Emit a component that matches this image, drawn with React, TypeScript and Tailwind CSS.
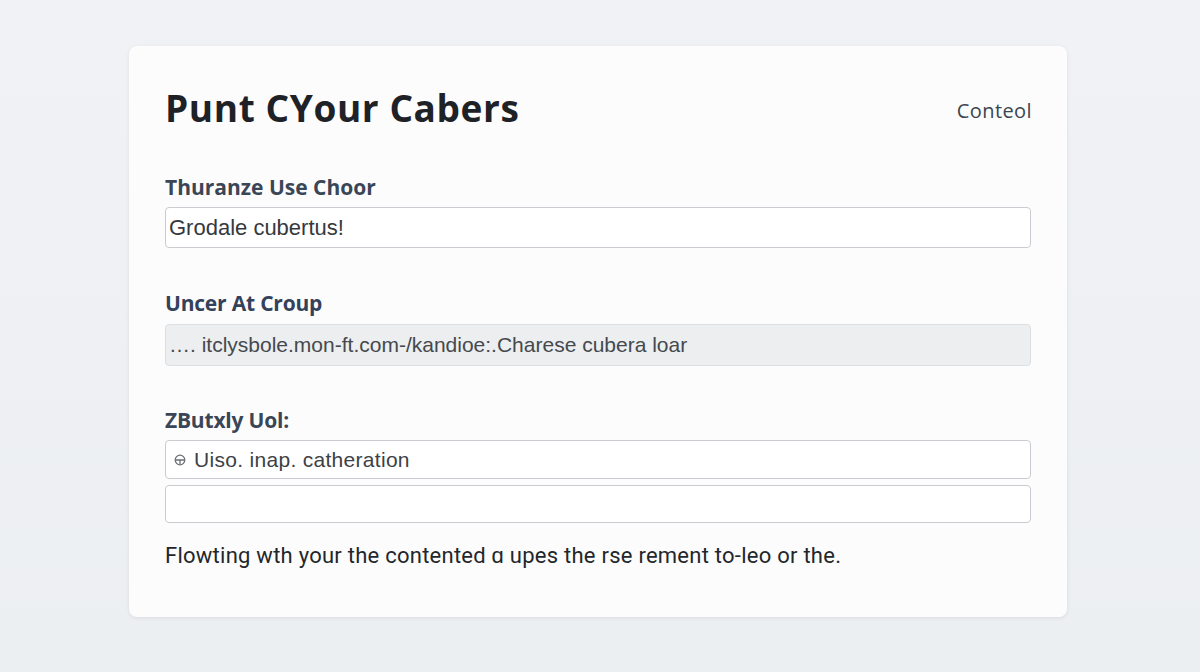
export default function App() {
  return (
    <div className="min-h-[672px] w-full bg-gradient-to-b from-[#f0f2f5] to-[#eceff2] pt-[46px]">
      <div className="ml-[129px] w-[938px] h-[571px] rounded-[8px] bg-[#fcfcfc] shadow-[0_1px_4px_rgba(0,0,0,0.08)] pt-[40px] pl-[36px] pr-[35px]">
        {/* header */}
        <div className="flex items-center justify-between h-[44px]">
          <h1 className="text-[37px] leading-[44px] font-bold tracking-[0.6px] text-[#1e2227] font-['Open_Sans',sans-serif]">
            Punt CYour Cabers
          </h1>
          <span className="text-[20px] font-medium tracking-[0.4px] text-[#3b4550] font-['Open_Sans',sans-serif] mt-[5px]">Conteol</span>
        </div>

        <div className="w-[866px]">
          <label className="block mt-[45px] text-[21px] leading-[24px] font-bold tracking-[0px] text-[#3a4656] font-['Open_Sans',sans-serif]">
            Thuranze Use Choor
          </label>
          <div className="mt-[8px] h-[41px] flex items-center rounded-[4px] border border-[#c9cdd1] bg-white px-[3px] text-[22px] text-[#35393d] font-['Liberation_Sans',sans-serif]">
            Grodale cubertus!
          </div>

          <label className="block mt-[43px] text-[21px] leading-[24px] font-bold tracking-[-0.2px] text-[#34415a] font-['Open_Sans',sans-serif]">
            Uncer At Croup
          </label>
          <div className="mt-[9px] h-[42px] flex items-center rounded-[4px] border border-[#dde0e3] bg-[#eceef0] px-[3px] text-[21px] text-[#45494d] font-['Liberation_Sans',sans-serif]">
            …. itclysbole.mon-ft.com-/kandioe:.Charese cubera loar
          </div>

          <label className="block mt-[42px] text-[21px] leading-[24px] font-bold tracking-[-0.2px] text-[#3a4656] font-['Open_Sans',sans-serif]">
            ZButxly Uol:
          </label>
          <div className="mt-[8px] h-[39px] flex items-center gap-[8px] rounded-[4px] border border-[#c9cdd1] bg-white pl-[8px] text-[21px] tracking-[0.3px] text-[#3d4146] font-['Liberation_Sans',sans-serif]">
            <svg width="12" height="12" viewBox="0 0 12 12" className="shrink-0">
              <circle cx="6" cy="6" r="4.8" fill="none" stroke="#6a6f75" strokeWidth="1.3" />
              <path d="M2 6h8M6 6v4" stroke="#6a6f75" strokeWidth="1.3" fill="none" />
            </svg>
            <span>Uiso. inap. catheration</span>
          </div>
          <div className="mt-[6px] h-[38px] rounded-[4px] border border-[#c9cdd1] bg-white" />

          <p className="mt-[21px] text-[22px] leading-[24px] tracking-[0.25px] text-[#23272b] font-['Roboto',sans-serif]">
            Flowting wth your the contented ɑ upes the rse rement to-leo or the.
          </p>
        </div>
      </div>
    </div>
  );
}
